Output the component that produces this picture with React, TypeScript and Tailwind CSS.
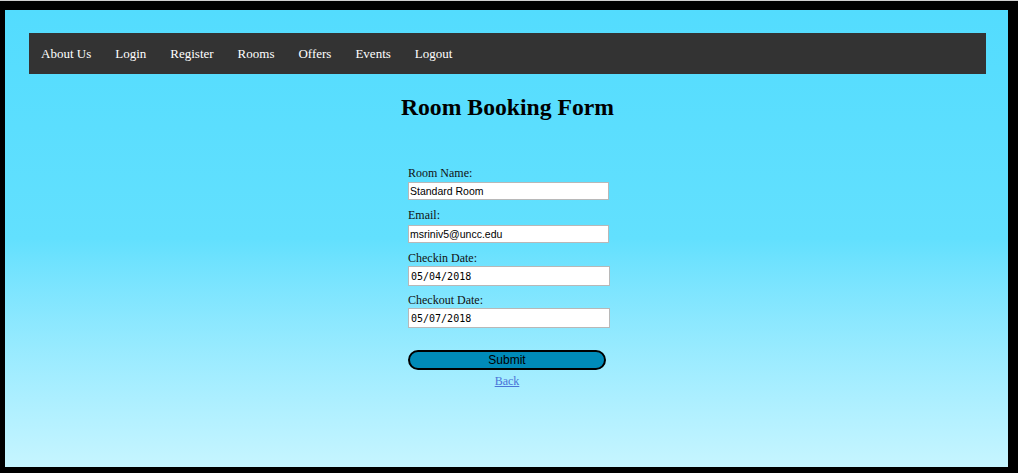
import React from "react";

const serif = { fontFamily: '"Liberation Serif", "Times New Roman", serif' };

export default function App() {
  const links = ["About Us", "Login", "Register", "Rooms", "Offers", "Events", "Logout"];
  return (
    <div className="w-[1018px] h-[473px] bg-black border-t border-[#d0d0d0] pt-[9px] pl-[5px] pr-[10px] pb-[6px]" style={serif}>
      <div className="w-full h-full bg-gradient-to-b from-[#53dcfe] via-[#62e0fe] to-[#c6f5ff] pt-[23px] pl-[24px] pr-[22px]">
        <nav className="h-[41px] bg-[#333333] flex items-center">
          {links.map((l) => (
            <a key={l} className="px-3 text-[13px] text-white leading-none">
              {l}
            </a>
          ))}
        </nav>
        <h1 className="mt-[19px] text-center text-[23.7px] leading-[28px] font-bold text-black">Room Booking Form</h1>
        <form className="mt-[44px] ml-[379px] w-[202px] flex flex-col">
          <label className="text-[12px] leading-[16px] text-[#111]">Room Name:</label>
          <input
            readOnly
            value="Standard Room"
            className="mt-px h-[18px] w-[201px] bg-white border border-[#b8b8b8] px-[1px] text-[10.5px] text-black outline-none"
            style={{ fontFamily: '"Liberation Sans", Arial, sans-serif' }}
          />
          <label className="mt-[7px] text-[12px] leading-[16px] text-[#111]">Email:</label>
          <input
            readOnly
            value="msriniv5@uncc.edu"
            className="mt-[2px] h-[18px] w-[201px] bg-white border border-[#b8b8b8] px-[1px] text-[10.5px] text-black outline-none"
            style={{ fontFamily: '"Liberation Sans", Arial, sans-serif' }}
          />
          <label className="mt-[7px] text-[12px] leading-[16px] text-[#111]">Checkin Date:</label>
          <input
            readOnly
            value="05/04/2018"
            className="mt-0 h-[20px] w-[202px] bg-white border border-[#b8b8b8] px-[2px] text-[10px] text-black outline-none"
            style={{ fontFamily: '"DejaVu Sans Mono", "Liberation Mono", monospace' }}
          />
          <label className="mt-[6px] text-[12px] leading-[16px] text-[#111]">Checkout Date:</label>
          <input
            readOnly
            value="05/07/2018"
            className="mt-0 h-[20px] w-[202px] bg-white border border-[#b8b8b8] px-[2px] text-[10px] text-black outline-none"
            style={{ fontFamily: '"DejaVu Sans Mono", "Liberation Mono", monospace' }}
          />
          <button
            type="button"
            className="mt-[22px] h-[20px] w-[198px] rounded-full border-2 border-black bg-[#008bb9] text-[12px] leading-none text-black"
            style={{ fontFamily: '"Liberation Sans", Arial, sans-serif' }}
          >
            Submit
          </button>
          <a className="mt-[3px] w-[198px] text-center text-[12px] leading-[16px] text-[#4a74d8] underline">Back</a>
        </form>
      </div>
    </div>
  );
}
